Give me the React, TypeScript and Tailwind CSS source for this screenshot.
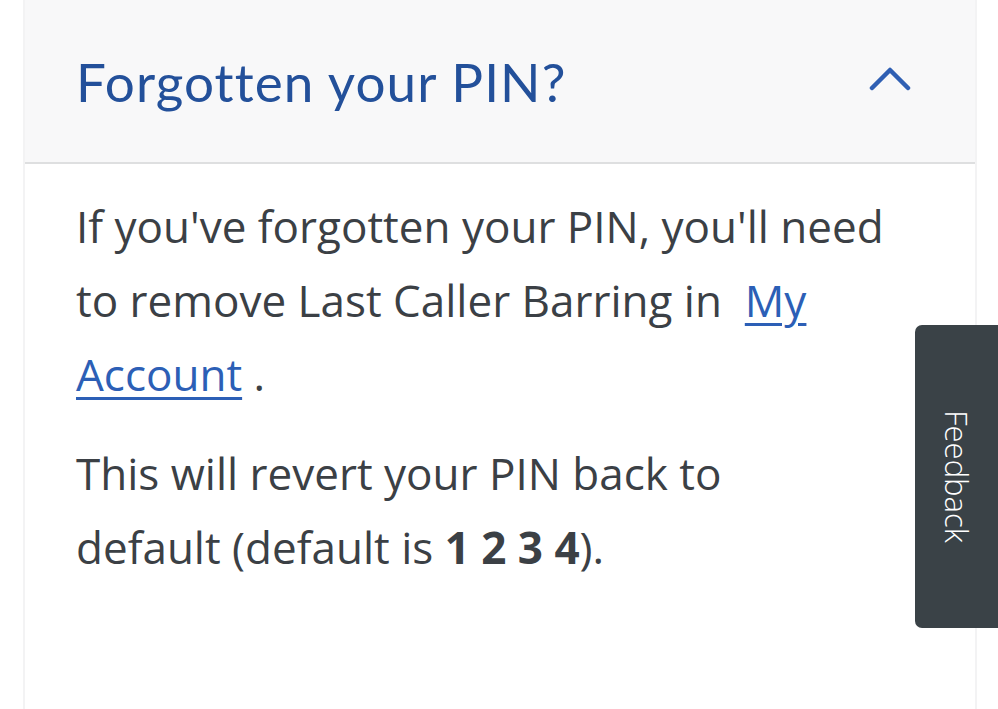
import React from "react";

export default function App() {
  return (
    <div className="relative min-h-[709px] w-[998px] overflow-hidden bg-white">
      <div className="mx-[23px] w-[954px] min-h-[760px] border-x-2 border-[#f3f3f4] bg-white">
        <div className="flex h-[164px] items-center justify-between border-b-2 border-[#dedfe0] bg-[#f8f8f9] pl-[51px] pr-[64px]">
          <h2
            className="text-[53px] leading-none tracking-[1.1px] text-[#23509a]"
            style={{ fontFamily: "Lato, 'Noto Sans', sans-serif" }}
          >
            Forgotten your PIN?
          </h2>
          <svg width="42" height="26" viewBox="0 0 42 26" fill="none" className="mt-[-4px]">
            <path
              d="M3 22 L21 4 L39 22"
              stroke="#2f5fb3"
              strokeWidth="4.5"
              strokeLinecap="round"
              strokeLinejoin="round"
            />
          </svg>
        </div>
        <div
          className="w-[860px] pl-[51px] pt-[25px] text-[44px] leading-[74px] text-[#3b4045]"
          style={{ fontFamily: "'Open Sans', 'Noto Sans', sans-serif" }}
        >
          <p>
            If you've forgotten your PIN, you'll need to remove Last Caller Barring in{"\u00a0 "}
            <a href="#" className="text-[#2c5fb6] underline decoration-[3px] underline-offset-[6px]">
              My Account
            </a>{" "}
            .
          </p>
          <p className="mt-[25px]">
            This will revert your PIN back to
            <br />
            default (default is <b className="font-bold">1 2 3 4</b>).
          </p>
        </div>
      </div>
      <div className="absolute left-[915px] top-[325px] flex h-[303px] w-[83px] items-center justify-center rounded-l-[7px] bg-[#3a4247]">
        <span
          className="text-[31px] font-light leading-none text-white [writing-mode:vertical-rl]"
          style={{ fontFamily: "'Open Sans', 'Noto Sans', sans-serif" }}
        >
          Feedback
        </span>
      </div>
    </div>
  );
}
